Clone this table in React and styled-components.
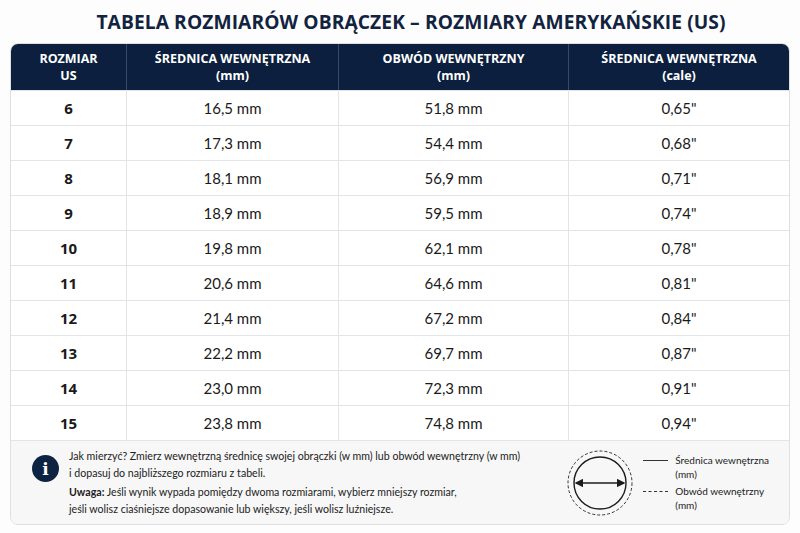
import React from "react";
import styled, { createGlobalStyle } from "styled-components";

const GlobalStyle = createGlobalStyle`
  body {
    margin: 0;
    background: #fdfdfd;
    font-family: "Lato", "Open Sans", sans-serif;
    color: #1c1c1c;
  }
`;

const sizes = [
  ["6", "16,5 mm", "51,8 mm", "0,65\""],
  ["7", "17,3 mm", "54,4 mm", "0,68\""],
  ["8", "18,1 mm", "56,9 mm", "0,71\""],
  ["9", "18,9 mm", "59,5 mm", "0,74\""],
  ["10", "19,8 mm", "62,1 mm", "0,78\""],
  ["11", "20,6 mm", "64,6 mm", "0,81\""],
  ["12", "21,4 mm", "67,2 mm", "0,84\""],
  ["13", "22,2 mm", "69,7 mm", "0,87\""],
  ["14", "23,0 mm", "72,3 mm", "0,91\""],
  ["15", "23,8 mm", "74,8 mm", "0,94\""],
];

const headers = [
  ["ROZMIAR", "US"],
  ["ŚREDNICA WEWNĘTRZNA", "(mm)"],
  ["OBWÓD WEWNĘTRZNY", "(mm)"],
  ["ŚREDNICA WEWNĘTRZNA", "(cale)"],
];

export default function App() {
  return (
    <>
      <GlobalStyle />
      <Page>
        <Title>TABELA ROZMIARÓW OBRĄCZEK – ROZMIARY AMERYKAŃSKIE (US)</Title>
        <Card>
          <Grid>
            {headers.map((h, i) => (
              <HeadCell key={i} $first={i === 0}>
                {h[0]}
                <br />
                {h[1]}
              </HeadCell>
            ))}
            {sizes.map((row) =>
              row.map((val, i) => (
                <Cell key={row[0] + i} $first={i === 0}>
                  {val}
                </Cell>
              ))
            )}
          </Grid>
          <Info>
            <InfoIcon>i</InfoIcon>
            <InfoText>
              <p>
                Jak mierzyć? Zmierz wewnętrzną średnicę swojej obrączki (w mm) lub
                obwód wewnętrzny (w mm)
                <br />i dopasuj do najbliższego rozmiaru z tabeli.
              </p>
              <p>
                <b>Uwaga:</b> Jeśli wynik wypada pomiędzy dwoma rozmiarami, wybierz
                mniejszy rozmiar,
                <br />
                jeśli wolisz ciaśniejsze dopasowanie lub większy, jeśli wolisz
                luźniejsze.
              </p>
            </InfoText>
            <Diagram>
              <svg width="70" height="70" viewBox="0 0 70 70">
                <defs>
                  <marker id="ah" markerWidth="6" markerHeight="6" refX="5" refY="3" orient="auto-start-reverse">
                    <path d="M0,0 L6,3 L0,6 z" fill="#1c1c1c" />
                  </marker>
                </defs>
                <circle cx="35" cy="35" r="32" fill="none" stroke="#333" strokeWidth="1" strokeDasharray="3 2" />
                <circle cx="35" cy="35" r="26" fill="none" stroke="#1c1c1c" strokeWidth="1.4" />
                <line x1="11" y1="35" x2="59" y2="35" stroke="#1c1c1c" strokeWidth="1.4" markerStart="url(#ah)" markerEnd="url(#ah)" />
              </svg>
              <Legend>
                <LegendItem>
                  <LegendLine />
                  <span>
                    Średnica wewnętrzna
                    <br />
                    (mm)
                  </span>
                </LegendItem>
                <LegendItem>
                  <LegendLine $dashed />
                  <span>
                    Obwód wewnętrzny
                    <br />
                    (mm)
                  </span>
                </LegendItem>
              </Legend>
            </Diagram>
          </Info>
        </Card>
      </Page>
    </>
  );
}

const Page = styled.div`
  width: 800px;
  height: 533px;
  padding: 0 10px;
  box-sizing: border-box;
`;

const Title = styled.h1`
  margin: 0;
  height: 43px;
  padding-left: 22px;
  display: flex;
  align-items: center;
  justify-content: center;
  font-family: "Open Sans", sans-serif;
  font-weight: 700;
  font-size: 19.2px;
  color: #12233f;
  letter-spacing: 0.1px;
`;

const Card = styled.div`
  border: 1px solid #dedfe3;
  border-radius: 8px;
  overflow: hidden;
  background: #fff;
`;

const Grid = styled.div`
  display: grid;
  grid-template-columns: 115px 212px 230px 1fr;
`;

const HeadCell = styled.div`
  height: 46px;
  background: #0c1f3e;
  color: #fff;
  font-family: "Open Sans", sans-serif;
  font-weight: 700;
  font-size: 12.5px;
  line-height: 17px;
  display: flex;
  align-items: center;
  justify-content: center;
  text-align: center;
  border-left: ${(p) => (p.$first ? "none" : "1px solid #3a4a66")};
`;

const Cell = styled.div`
  height: 35px;
  display: flex;
  align-items: center;
  justify-content: center;
  border-top: 1px solid #e3e4e8;
  border-left: ${(p) => (p.$first ? "none" : "1px solid #e3e4e8")};
  box-sizing: border-box;
  font-family: ${(p) => (p.$first ? '"Open Sans", sans-serif' : '"Lato", sans-serif')};
  font-weight: ${(p) => (p.$first ? 700 : 400)};
  font-size: 15px;
  color: #1a1a1a;
`;

const Info = styled.div`
  height: 83px;
  display: flex;
  align-items: center;
  background: #f7f7f7;
  border-top: 1px solid #e3e4e8;
  padding: 0 0 0 21px;
`;

const InfoIcon = styled.div`
  align-self: flex-start;
  margin-top: 14px;
  width: 27px;
  height: 27px;
  border-radius: 50%;
  background: #0e2342;
  color: #fff;
  font-family: "DejaVu Serif", serif;
  font-weight: 700;
  font-size: 17px;
  display: flex;
  align-items: center;
  justify-content: center;
  flex-shrink: 0;
`;

const InfoText = styled.div`
  margin-left: 10px;
  width: 490px;
  font-size: 10.6px;
  line-height: 16.5px;
  color: #222;

  p {
    margin: 0;
  }

  p + p {
    margin-top: 3px;
  }

  b {
    font-weight: 700;
  }
`;

const Diagram = styled.div`
  margin-left: auto;
  margin-right: 20px;
  display: flex;
  align-items: center;
  gap: 8px;
`;

const Legend = styled.div`
  display: flex;
  flex-direction: column;
  gap: 3px;
`;

const LegendItem = styled.div`
  display: flex;
  align-items: flex-start;
  gap: 7px;
  font-size: 10px;
  line-height: 14px;
  color: #222;
`;

const LegendLine = styled.div`
  width: 25px;
  margin-top: 7px;
  border-top: 1px ${(p) => (p.$dashed ? "dashed" : "solid")} #333;
`;
